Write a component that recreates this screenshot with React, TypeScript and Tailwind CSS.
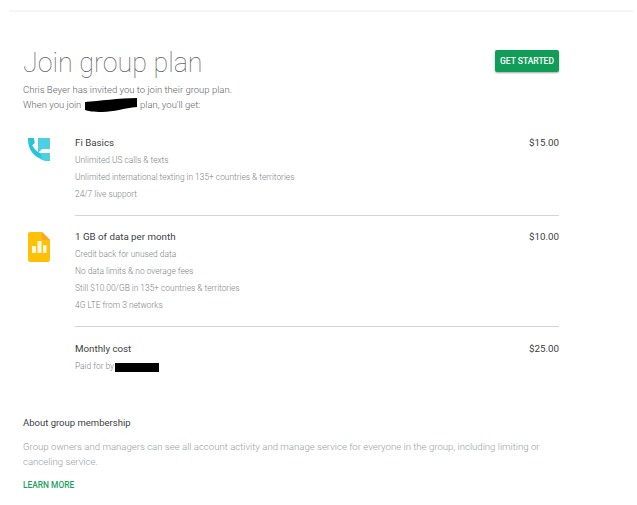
const font = "font-['Roboto',sans-serif]";

const PhoneChatIcon = () => (
  <svg width="22" height="23" viewBox="0 0 22 23" className="block">
    <path d="M10 0h12v11H14l-4 4z" fill="#4dd0e1" />
    <path d="M13 15h9v8h-3c-2.500 0-4.500-.7-6.500-1.800z" fill="#4dd0e1" />
    <path d="M0 0h6l.8 5-2.500 2.300c1.800 3.700 4.400 6.300 8.700 8.200l.6 5.500C6 19 0 11 0 2z" fill="#26c6da" />
  </svg>
);

const DataIcon = () => (
  <svg width="22" height="30" viewBox="0 0 22 30" className="block">
    <path d="M2 0h12l8 8v20a2 2 0 0 1-2 2H2a2 2 0 0 1-2-2V2a2 2 0 0 1 2-2z" fill="#ffc107" />
    <path d="M14 0l8 8h-8z" fill="#f9a825" />
    <path d="M4 14h4v7H4zM9.500 9h4v12h-4zM15 13h3.500v8H15z" fill="#fff8e1" />
  </svg>
);

const Row = ({ icon, title, price, lines }: { icon?: React.ReactNode; title: string; price: string; lines: string[] }) => (
  <div className="flex">
    <div className="w-[52px] shrink-0 pl-[5px] pt-[2px]">{icon}</div>
    <div className="flex-1">
      <div className="flex justify-between text-[9.75px] leading-[14px] text-[#3c4043]">
        <span>{title}</span>
        <span>{price}</span>
      </div>
      <div className="mt-[2px] flex flex-col text-[8.4px] font-light leading-[17px] text-[#808386]">
        {lines.map((l) => (
          <span key={l}>{l}</span>
        ))}
      </div>
    </div>
  </div>
);

export default function App() {
  return (
    <div className={`${font} h-[505px] w-[637px] overflow-hidden bg-white pl-[9px] pr-[4px] pt-[10px]`}>
      <div className="h-[2px] bg-[#f5f5f5]" />
      <div className="w-[550px] pl-[14px] pt-[33px]">
        <div className="flex items-start justify-between">
          <div>
            <h1 className="text-[26.9px] font-thin leading-[36px] text-[#5f6368]">Join group plan</h1>
            <p className="mt-[1px] text-[9.5px] font-light leading-[15px] text-[#5f6368]">
              Chris Beyer has invited you to join their group plan.
              <br />
              When you join{" "}
              <svg width="54" height="14" viewBox="0 0 54 14" className="inline-block align-[-4px]">
                <path d="M1 4C15 3 35 0 53 0v9C40 10 30 14 18 14 10 14 3 13 1 12z" fill="#000" />
              </svg>{" "}
              plan, you'll get:
            </p>
          </div>
          <button className="mt-[5px] h-[22px] w-[64px] rounded-[2px] bg-[#0f9d58] text-[8.5px] font-medium text-white shadow-[0_1px_2px_rgba(0,0,0,0.35)]">
            GET STARTED
          </button>
        </div>

        <div className="mt-[24px]">
          <Row
            icon={<PhoneChatIcon />}
            title="Fi Basics"
            price="$15.00"
            lines={["Unlimited US calls & texts", "Unlimited international texting in 135+ countries & territories", "24/7 live support"]}
          />
        </div>
        <div className="mb-[14px] ml-[52px] mt-[12px] h-px bg-[#d5d5d5]" />
        <Row
          icon={<DataIcon />}
          title="1 GB of data per month"
          price="$10.00"
          lines={["Credit back for unused data", "No data limits & no overage fees", "Still $10.00/GB in 135+ countries & territories", "4G LTE from 3 networks"]}
        />
        <div className="mb-[15px] ml-[52px] mt-[12px] h-px bg-[#d5d5d5]" />
        <div className="flex">
          <div className="w-[52px] shrink-0" />
          <div className="flex-1">
            <div className="flex justify-between text-[9.75px] leading-[14px] text-[#3c4043]">
              <span>Monthly cost</span>
              <span>$25.00</span>
            </div>
            <div className="mt-[2px] flex items-center text-[8.4px] font-light leading-[17px] text-[#808386]">
              Paid for by
              <span className="ml-[1px] mt-[2px] inline-block h-[9px] w-[44px] bg-black" />
            </div>
          </div>
        </div>

        <h2 className="mt-[41px] text-[9.5px] leading-[14px] text-[#3c4043]">About group membership</h2>
        <p className="mt-[10px] w-[530px] text-[9.6px] font-light leading-[14.5px] text-[#9a9da0]">
          Group owners and managers can see all account activity and manage service for everyone in the group, including limiting or canceling service.
        </p>
        <a className="mt-[10px] block text-[8.4px] font-medium leading-[12px] text-[#1a9f5f]">LEARN MORE</a>
      </div>
    </div>
  );
}
